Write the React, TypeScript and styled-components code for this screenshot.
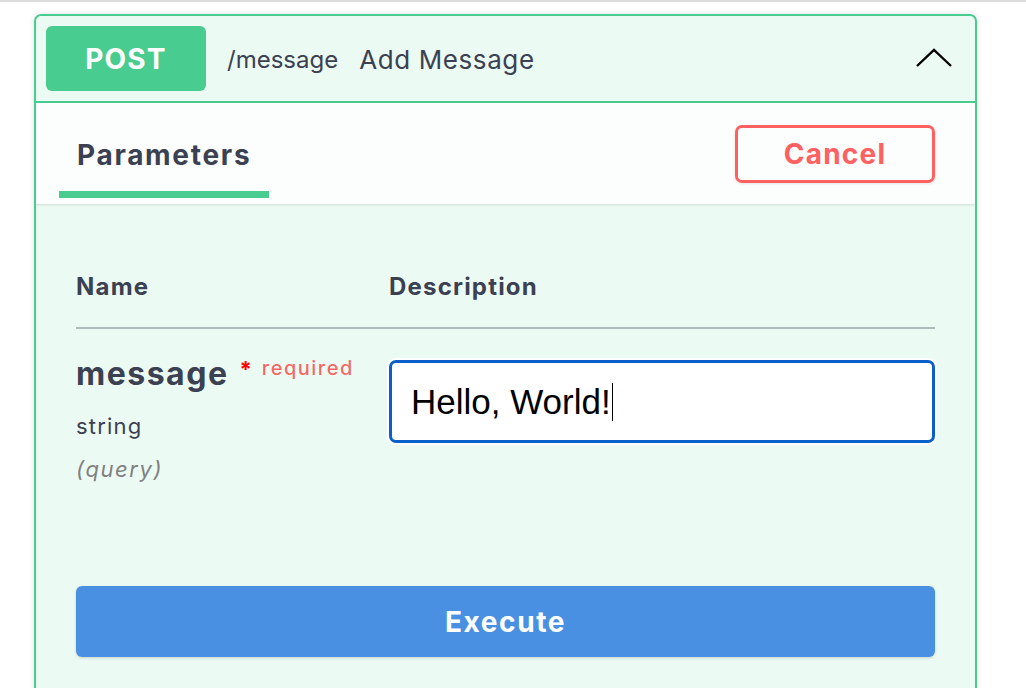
import React from 'react';
import styled, { createGlobalStyle } from 'styled-components';

const GlobalStyle = createGlobalStyle`
  html, body {
    margin: 0;
    padding: 0;
    background: #fff;
    font-family: Inter, "Noto Sans", sans-serif;
    color: #3b4151;
  }
`;

const TopRule = styled.div`
  height: 2px;
  background: #dcdcdc;
`;

const OpBlock = styled.div`
  margin: 12px 0 0 34px;
  width: 943px;
  height: 700px;
  box-sizing: border-box;
  border: 2px solid #49cc90;
  border-radius: 7px;
  background: rgba(73, 204, 144, 0.1);
  box-shadow: 0 0 6px rgba(0, 0, 0, 0.12);
  overflow: hidden;
`;

const Summary = styled.div`
  display: flex;
  align-items: center;
  padding: 10px 23px 10px 10px;
  border-bottom: 2px solid #49cc90;
`;

const MethodBadge = styled.span`
  width: 160px;
  height: 65px;
  display: flex;
  align-items: center;
  justify-content: center;
  border-radius: 6px;
  background: #49cc90;
  color: #fff;
  font-weight: 700;
  font-size: 28px;
  letter-spacing: 1.2px;
`;

const Path = styled.span`
  margin-left: 21px;
  font-size: 24px;
  color: #3b4151;
  padding-top: 2px;
`;

const SummaryText = styled.span`
  margin-left: 21px;
  flex: 1;
  font-size: 26px;
  letter-spacing: 0.6px;
  color: #3b4151;
  padding-top: 2px;
`;

const Chevron = styled.svg`
  width: 36px;
  height: 20px;
  margin-top: -2px;
`;

const TabHeader = styled.div`
  display: flex;
  align-items: center;
  justify-content: space-between;
  height: 101px;
  padding: 0 40px 0 23px;
  background: rgba(255, 255, 255, 0.8);
  box-shadow: 0 1px 2px rgba(0, 0, 0, 0.12);
`;

const Tab = styled.div<{ $active?: boolean }>`
  position: relative;
  align-self: stretch;
  display: flex;
  align-items: center;
  padding: 2px 18px 0 18px;
  font-size: 28px;
  font-weight: 700;
  letter-spacing: 1.7px;
  color: #3b4151;

  &::after {
    content: '';
    display: ${p => (p.$active ? 'block' : 'none')};
    position: absolute;
    left: 0;
    right: 0;
    bottom: 6px;
    height: 7px;
    background: #49cc90;
  }
`;

const OutlineButton = styled.button`
  width: 200px;
  height: 58px;
  box-sizing: border-box;
  border: 3px solid #ff6060;
  border-radius: 7px;
  background: transparent;
  color: #ff6060;
  font-family: inherit;
  font-size: 28px;
  font-weight: 700;
  letter-spacing: 1.2px;
  box-shadow: 0 1px 3px rgba(0, 0, 0, 0.1);
`;

const Body = styled.div`
  padding: 68px 40px 0 40px;
`;

const ParamsTable = styled.div`
  display: grid;
  grid-template-columns: 313px 1fr;
`;

const HeadCell = styled.div`
  font-size: 24px;
  font-weight: 700;
  letter-spacing: 1.2px;
  color: #3b4151;
  padding-bottom: 26px;
  border-bottom: 2px solid rgba(59, 65, 81, 0.35);
`;

const NameCell = styled.div`
  padding-top: 25px;
`;

const NameLine = styled.div`
  display: flex;
  align-items: flex-start;
`;

const ParamName = styled.span`
  font-size: 32px;
  font-weight: 700;
  letter-spacing: 1.5px;
  color: #3b4151;
`;

const Asterisk = styled.span`
  margin: 2px 0 0 11px;
  color: red;
  font-size: 22px;
  font-weight: 700;
`;

const Required = styled.span`
  margin: 2px 0 0 10px;
  color: rgba(255, 0, 0, 0.6);
  font-size: 20px;
  font-weight: 500;
  letter-spacing: 1.5px;
`;

const ParamType = styled.div`
  margin-top: 20px;
  font-size: 22px;
  letter-spacing: 1.2px;
  color: #3b4151;
`;

const ParamIn = styled.div`
  margin-top: 17px;
  font-size: 22px;
  font-style: italic;
  letter-spacing: 1.6px;
  color: #808080;
`;

const DescCell = styled.div`
  padding-top: 31px;
`;

const TextInput = styled.div`
  height: 83px;
  box-sizing: border-box;
  border: 3px solid #0b5fc8;
  border-radius: 7px;
  background: #fff;
  box-shadow: 0 0 0 2px #fff;
  display: flex;
  align-items: center;
  padding-left: 19px;
  font-family: "Liberation Sans", Arial, sans-serif;
  font-size: 35px;
  color: #000;
`;

const Caret = styled.span`
  display: inline-block;
  width: 1px;
  height: 38px;
  margin-left: 1px;
  background: #000;
`;

const ExecuteButton = styled.button`
  display: block;
  width: 100%;
  height: 71px;
  margin-top: 104px;
  border: none;
  border-radius: 6px;
  background: #4990e2;
  color: #fff;
  font-family: inherit;
  font-size: 28px;
  font-weight: 700;
  letter-spacing: 1.6px;
  box-shadow: 0 1px 3px rgba(0, 0, 0, 0.15);
`;

export default function App() {
  return (
    <>
      <GlobalStyle />
      <TopRule />
      <OpBlock>
        <Summary>
          <MethodBadge>POST</MethodBadge>
          <Path>/message</Path>
          <SummaryText>Add Message</SummaryText>
          <Chevron viewBox="0 0 36 20">
            <path d="M1 18 L18 2 L35 18" fill="none" stroke="#000" strokeWidth="2.4" />
          </Chevron>
        </Summary>
        <TabHeader>
          <Tab $active>Parameters</Tab>
          <OutlineButton>Cancel</OutlineButton>
        </TabHeader>
        <Body>
          <ParamsTable>
            <HeadCell>Name</HeadCell>
            <HeadCell>Description</HeadCell>
            <NameCell>
              <NameLine>
                <ParamName>message</ParamName>
                <Asterisk>*</Asterisk>
                <Required>required</Required>
              </NameLine>
              <ParamType>string</ParamType>
              <ParamIn>(query)</ParamIn>
            </NameCell>
            <DescCell>
              <TextInput>
                Hello, World!
                <Caret />
              </TextInput>
            </DescCell>
          </ParamsTable>
          <ExecuteButton>Execute</ExecuteButton>
        </Body>
      </OpBlock>
    </>
  );
}
